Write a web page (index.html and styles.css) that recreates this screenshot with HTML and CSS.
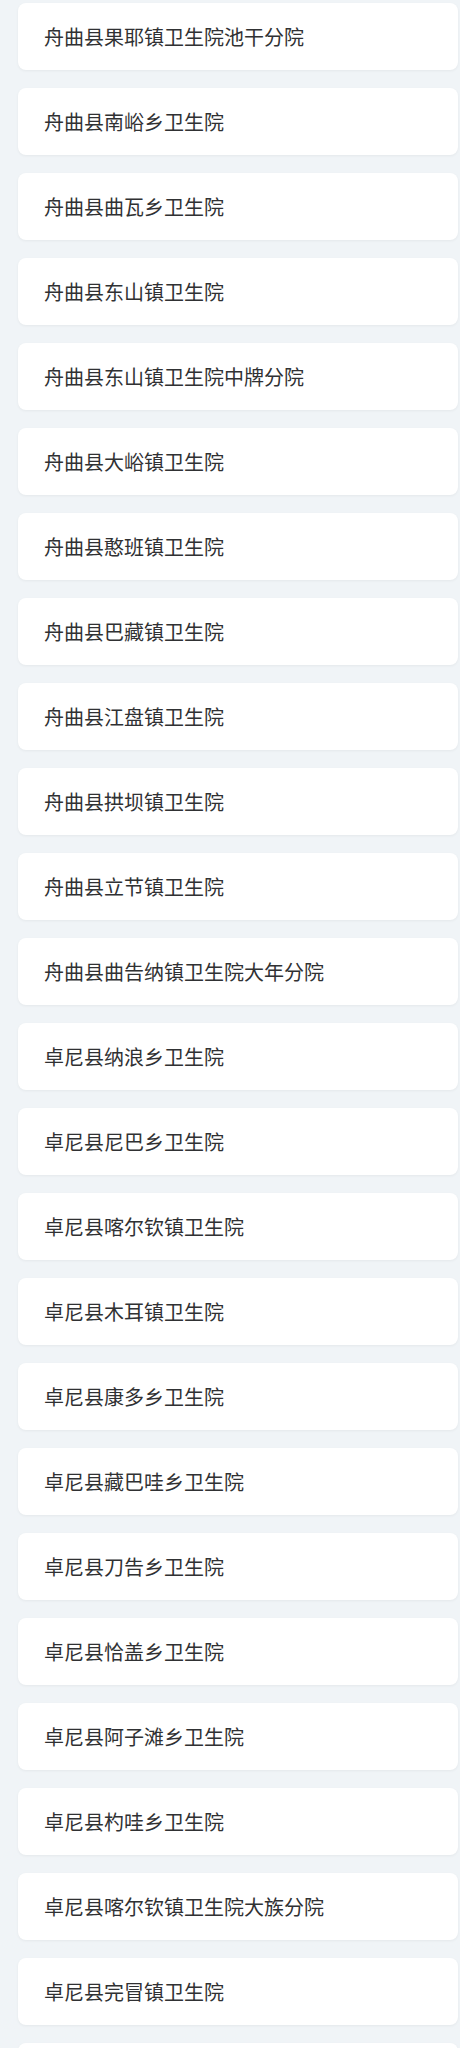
FILE: index.html
```html
<!DOCTYPE html>
<html lang="zh-CN">
<head>
<meta charset="utf-8">
<title>卫生院列表</title>
<link rel="stylesheet" href="styles.css">
</head>
<body>
<div class="list">
  <div class="card">舟曲县果耶镇卫生院池干分院</div>
  <div class="card">舟曲县南峪乡卫生院</div>
  <div class="card">舟曲县曲瓦乡卫生院</div>
  <div class="card">舟曲县东山镇卫生院</div>
  <div class="card">舟曲县东山镇卫生院中牌分院</div>
  <div class="card">舟曲县大峪镇卫生院</div>
  <div class="card">舟曲县憨班镇卫生院</div>
  <div class="card">舟曲县巴藏镇卫生院</div>
  <div class="card">舟曲县江盘镇卫生院</div>
  <div class="card">舟曲县拱坝镇卫生院</div>
  <div class="card">舟曲县立节镇卫生院</div>
  <div class="card">舟曲县曲告纳镇卫生院大年分院</div>
  <div class="card">卓尼县纳浪乡卫生院</div>
  <div class="card">卓尼县尼巴乡卫生院</div>
  <div class="card">卓尼县喀尔钦镇卫生院</div>
  <div class="card">卓尼县木耳镇卫生院</div>
  <div class="card">卓尼县康多乡卫生院</div>
  <div class="card">卓尼县藏巴哇乡卫生院</div>
  <div class="card">卓尼县刀告乡卫生院</div>
  <div class="card">卓尼县恰盖乡卫生院</div>
  <div class="card">卓尼县阿子滩乡卫生院</div>
  <div class="card">卓尼县杓哇乡卫生院</div>
  <div class="card">卓尼县喀尔钦镇卫生院大族分院</div>
  <div class="card">卓尼县完冒镇卫生院</div>
  <div class="card"></div>
</div>
</body>
</html>
```
FILE: styles.css
```css
html, body {
  margin: 0;
  padding: 0;
  background: #f0f4f7;
}
body {
  font-family: "Noto Sans CJK SC", "Microsoft YaHei", sans-serif;
}
.list {
  display: flex;
  flex-direction: column;
  gap: 18px;
  padding: 3px 2px 0 18px;
}
.card {
  box-sizing: border-box;
  height: 67px;
  display: flex;
  align-items: center;
  padding-left: 26px;
  background: #ffffff;
  border-radius: 8px;
  box-shadow: 0 1px 3px rgba(0, 0, 0, 0.05);
  font-size: 20px;
  color: #303133;
  white-space: nowrap;
}
```
